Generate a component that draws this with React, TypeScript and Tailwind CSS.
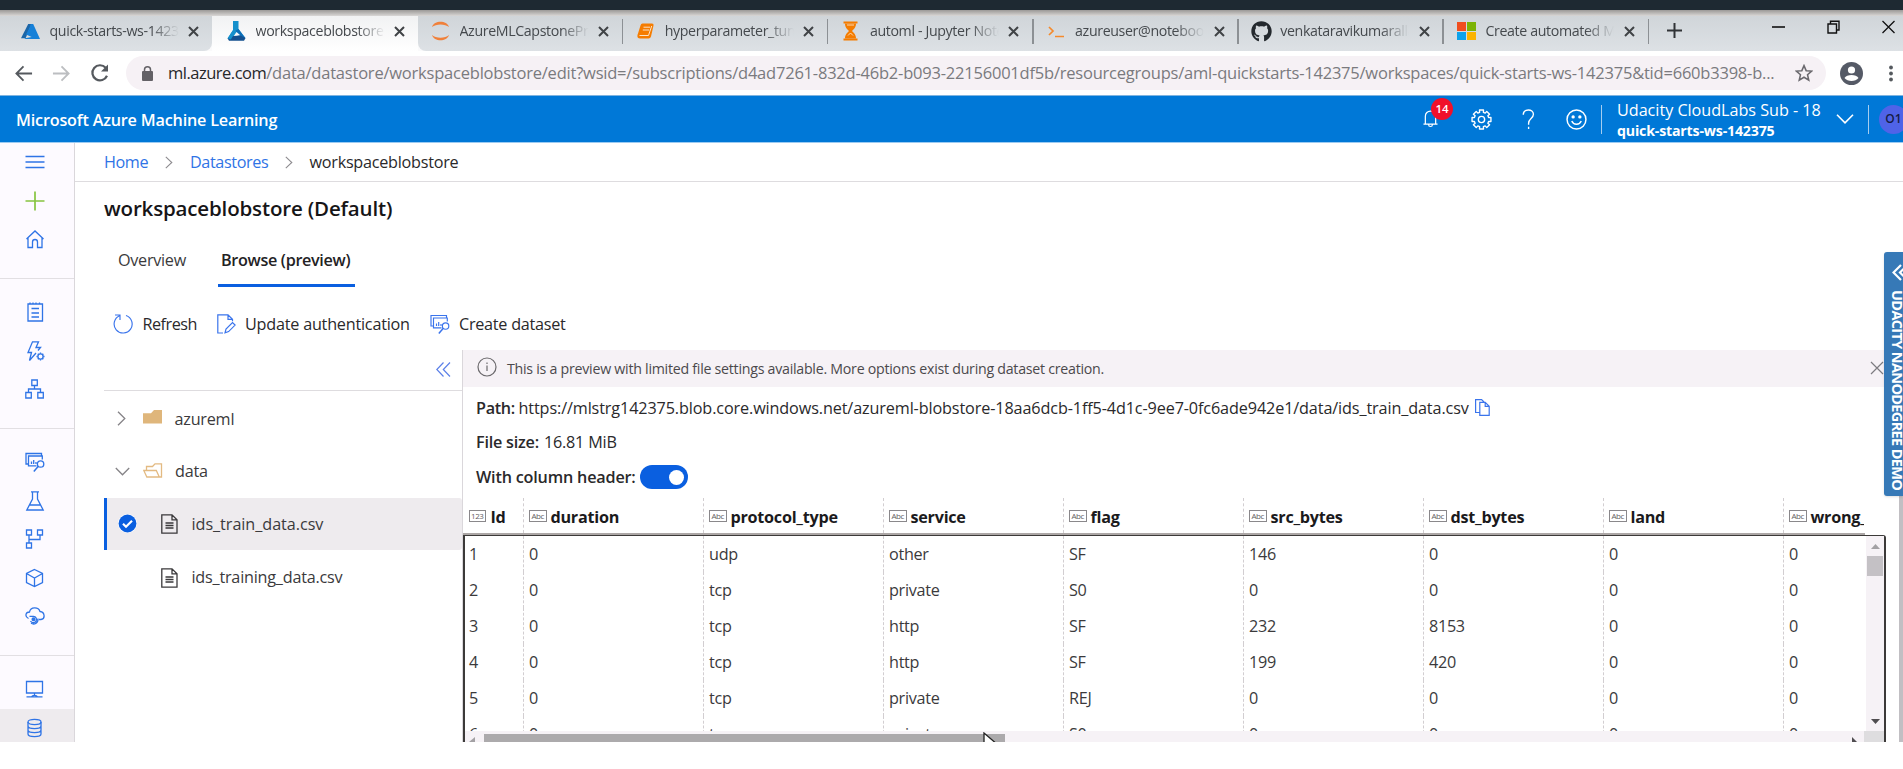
import type { ReactNode } from "react";
import { FaGithub } from "react-icons/fa";

type IconProps = { size?: number; className?: string; children: ReactNode; sw?: number };

function Icon({ size = 20, className = "", sw = 1.15, children }: IconProps) {
  return (
    <svg width={size} height={size} viewBox="0 0 20 20" fill="none" stroke="currentColor" strokeWidth={sw} className={`shrink-0 ${className}`}>
      {children}
    </svg>
  );
}

/* ---------- browser chrome ---------- */

const AzureLogo = () => (
  <svg width="19" height="17" viewBox="0 0 19 17" className="shrink-0">
    <path d="M7.2 1 0 15.2h4.6L10.6 1z" fill="#1b66a8" />
    <path d="M8.3 5.2 5 11.6l5.6 2.4L4 15.2 3.6 16H19L12.2 1H9.8z" fill="#1680d8" />
  </svg>
);
const FlaskLogo = () => (
  <svg width="19" height="20" viewBox="0 0 19 20" className="shrink-0">
    <path d="M6 0h5.500v8l6.500 9H1l5-8z" fill="#1590cc" />
    <path d="m8.500 9.500 3-1.500L18.500 17l-5 1z" fill="#0c6fb8" />
    <path d="M6.200 15.800 9.500 11l3.800 3.300z" fill="#fafafb" />
    <path d="M.5 17.200 6 15l7.500-.5 5 2.700-1.500 2.500H2z" fill="#14508f" />
    <path d="M.5 17.200 5.800 9.500l2 2.500-4 6.500z" fill="#1590cc" />
  </svg>
);
const JupyterLogo = () => (
  <svg width="19" height="20" viewBox="0 0 19 20" className="shrink-0" fill="#f0803a">
    <path d="M1 6C3-1 16-1 18 6 14 2.500 5 2.500 1 6zM1 14c2 7 15 7 17 0-4 3.500-13 3.500-17 0z" />
  </svg>
);
const BookLogo = () => (
  <svg width="19" height="20" viewBox="0 0 19 20" className="shrink-0">
    <path d="M6.500 2.500H16q2 0 1.500 2L15 15.500q-.5 2-2.500 2H4C1 17.500 1 14.500 2 12.500L4.500 4.500q.5-2 2-2z" fill="#f57c00" />
    <path d="M7.500 6.200h6.500M6.800 9h6.500M3.500 14.500h9l3.200-9.500" stroke="#fbe3c8" strokeWidth="1" fill="none" />
  </svg>
);
const HourglassLogo = () => (
  <svg width="19" height="20" viewBox="0 0 19 20" className="shrink-0">
    <path d="M2.500 1.500h14M2.500 18.500h14" stroke="#f57c00" strokeWidth="1.800" />
    <path d="M4 2.500c0 4 2 5.500 4 7.500-2 2-4 3.500-4 7.500h11c0-4-2-5.500-4-7.500 2-2 4-3.500 4-7.500z" fill="#f57c00" />
    <path d="M6 4h7M7 14.500l2.500-2.500 2.500 2.500" stroke="#fbe3c8" strokeWidth=".9" fill="none" />
  </svg>
);
const TermLogo = () => (
  <svg width="19" height="20" viewBox="0 0 19 20" className="shrink-0" fill="none" stroke="#f58a2c" strokeWidth="1.700">
    <path d="m2 6 4 4-4 4M8 15.500h9" />
  </svg>
);
const GithubLogo = () => <FaGithub size={21} className="-mx-px shrink-0 text-[#24292e]" />;
const MsLogo = () => (
  <span className="grid h-[18px] w-[19px] shrink-0 grid-cols-2 gap-px">
    <span className="bg-[#f04e1f]" />
    <span className="bg-[#7cb305]" />
    <span className="bg-[#0ea2ea]" />
    <span className="bg-[#fbb300]" />
  </span>
);

const tabs = [
  { logo: AzureLogo, text: "quick-starts-ws-142375", state: "first" },
  { logo: FlaskLogo, text: "workspaceblobstore", state: "active" },
  { logo: JupyterLogo, text: "AzureMLCapstoneProject", state: "" },
  { logo: BookLogo, text: "hyperparameter_tuning", state: "" },
  { logo: HourglassLogo, text: "automl - Jupyter Notebook", state: "" },
  { logo: TermLogo, text: "azureuser@notebook", state: "" },
  { logo: GithubLogo, text: "venkataravikumaralla", state: "" },
  { logo: MsLogo, text: "Create automated ML", state: "" },
];

function TabStrip() {
  return (
    <div className="flex h-[35px] shrink-0 bg-[#fafafb]">
      {tabs.map((t) => (
        <div
          key={t.text}
          className={
            t.state === "active"
              ? "flex h-full w-[206px] shrink-0 items-center bg-gradient-to-b from-[#f1f2f3] to-white pb-[5px] pl-[15px]"
              : t.state === "first"
                ? "flex h-full w-[212px] shrink-0 items-center rounded-br-[8px] bg-gradient-to-b from-[#d0d5d9] to-[#dde1e5] pb-[5px] pl-[21px]"
                : t.text.startsWith("AzureML")
                  ? "flex h-full w-[205.200px] shrink-0 items-center rounded-bl-[8px] bg-gradient-to-b from-[#d0d5d9] to-[#dde1e5] pb-[5px] pl-[13px]"
                  : "flex h-full w-[205.200px] shrink-0 items-center bg-gradient-to-b from-[#d0d5d9] to-[#dde1e5] pb-[5px] pl-[13px]"
          }
        >
          <t.logo />
          <span className="ml-[9.500px] w-[129px] shrink-0 overflow-hidden text-[14.200px] leading-[22px] tracking-[-0.360px] whitespace-nowrap text-[#45494d] [mask-image:linear-gradient(to_right,black_78%,transparent)]">
            {t.text}
          </span>
          <svg width="11" height="11" viewBox="0 0 11 11" className="ml-[9.500px] shrink-0" stroke="#404346" strokeWidth="2">
            <path d="m1 1 9 9M10 1 1 10" />
          </svg>
          {t.state === "" && <span className="ml-auto h-[25px] w-[1.500px] bg-[#8c9094]" />}
        </div>
      ))}
      <div className="flex flex-1 items-start justify-between bg-gradient-to-b from-[#d0d5d9] to-[#dde1e5] pt-[4px] pr-[8px] pl-[18px] text-[#222]">
        <svg width="15" height="15" viewBox="0 0 15 15" stroke="#303336" strokeWidth="2" className="mt-[3px]">
          <path d="M7.500 0v15M0 7.500h15" />
        </svg>
        <div className="flex items-center gap-[42px]">
          <svg width="13" height="14" viewBox="0 0 13 14" stroke="#111" strokeWidth="1.600">
            <path d="M0 7h13" />
          </svg>
          <svg width="13" height="14" viewBox="0 0 13 14" stroke="#111" strokeWidth="1.400" fill="none">
            <path d="M1 4h8.500v9H1zM3.500 4V1.200h8.500v8.800H9.500" />
          </svg>
          <svg width="13" height="14" viewBox="0 0 13 14" stroke="#111" strokeWidth="1.300">
            <path d="m.5 1 12 12M12.500 1l-12 12" />
          </svg>
        </div>
      </div>
    </div>
  );
}

function AddressBar() {
  return (
    <div className="flex h-[44px] shrink-0 items-center bg-white pr-[8px] pl-[14px]">
      <Icon size={19} sw={1.9} className="text-[#55595e]">
        <path d="M19 10H2.500M10 2.500 2.500 10l7.500 7.500" />
      </Icon>
      <Icon size={19} sw={1.9} className="ml-[19px] text-[#bcbec1]">
        <path d="M1 10h16.500M10 2.500l7.500 7.500-7.500 7.500" />
      </Icon>
      <Icon size={20} sw={2.2} className="ml-[19px] text-[#55595e]">
        <path d="M17 12.800A7.600 7.600 0 1 1 15.700 4.800" />
        <path d="M18 1.500v7h-7z" fill="currentColor" stroke="none" />
      </Icon>
      <div className="ml-[16px] flex h-[34px] w-[1700px] shrink-0 items-center rounded-full bg-[#f6f1f5] pr-[13px] pl-[16px]">
        <svg width="11" height="15" viewBox="0 0 11 15" className="shrink-0">
          <rect x="0" y="5" width="11" height="10" rx="1" fill="#636166" />
          <path d="M2.500 6V3.800a3 3 0 0 1 6 0V6" fill="none" stroke="#636166" strokeWidth="1.500" />
        </svg>
        <span className="ml-[15px] w-[1610px] shrink-0 text-[16.500px] leading-[24px] tracking-[-0.215px] whitespace-nowrap text-[#7a7a7e]">
          <span className="tracking-[-0.500px] text-[#26272a]">ml.azure.com</span>
          /data/datastore/workspaceblobstore/edit?wsid=/subscriptions/d4ad7261-832d-46b2-b093-22156001df5b/resourcegroups/aml-quickstarts-142375/workspaces/quick-starts-ws-142375&amp;tid=660b3398-b...
        </span>
        <Icon size={18} sw={1.7} className="ml-auto text-[#6b696e]">
          <path d="m10 1.800 2.400 5.600 6.100.5-4.600 4 1.400 6L10 14.700 4.700 17.900l1.400-6-4.600-4 6.100-.5z" />
        </Icon>
      </div>
      <svg width="23" height="23" viewBox="0 0 23 23" className="ml-[14px] shrink-0">
        <circle cx="11.500" cy="11.500" r="11.500" fill="#555a66" />
        <circle cx="11.500" cy="8" r="3.600" fill="#fff" />
        <path d="M4.500 16c2-4 12-4 14 0-3 4-11 4-14 0z" fill="#fff" />
      </svg>
      <svg width="4" height="17" viewBox="0 0 4 17" fill="#55595e" className="ml-[26px] shrink-0">
        <circle cx="2" cy="2.500" r="1.900" />
        <circle cx="2" cy="8.500" r="1.900" />
        <circle cx="2" cy="14.500" r="1.900" />
      </svg>
    </div>
  );
}

/* ---------- azure header ---------- */

const gearPath = (() => {
  const pts: string[] = [];
  for (let i = 0; i < 8; i++) {
    const at = (deg: number, r: number) => {
      const a = ((i * 45 + deg) * Math.PI) / 180;
      return `${(10 + r * Math.cos(a)).toFixed(2)} ${(10 + r * Math.sin(a)).toFixed(2)}`;
    };
    pts.push(at(-12, 9.2), at(12, 9.2), at(15, 7), at(30, 7));
  }
  return `M${pts.join("L")}Z`;
})();

function AzureHeader() {
  return (
    <div className="flex h-[48px] shrink-0 items-center border-t border-b border-t-[#7fb4e0] border-b-[#9ccbf2] bg-[#0078d7] pl-[16px] text-white">
      <span className="pt-[3px] text-[16.200px] font-semibold tracking-[-0.190px]">Microsoft Azure Machine Learning</span>
      <div className="relative ml-auto flex h-full w-[15px] items-center">
        <svg width="16" height="20" viewBox="0 0 16 20" fill="none" stroke="#fff" strokeWidth="1.300">
          <path d="M.5 15.500h15M2.500 15.500V7a5.500 5.500 0 0 1 11 0v8.500M6 16a2 2 0 0 0 4 0" />
        </svg>
        <span className="absolute top-[2px] left-[8px] flex size-[22px] items-center justify-center rounded-full bg-[#f0102a] text-[11.500px] font-semibold">14</span>
      </div>
      <Icon size={21} className="ml-[33px]" sw={1.3}>
        <path d={gearPath} strokeLinejoin="round" />
        <circle cx="10" cy="10" r="3" />
      </Icon>
      <Icon size={21} className="ml-[26px]" sw={1.3}>
        <path d="M5 5.500C5-.5 14.700-.5 14.700 5c0 4-4.600 4.200-4.600 8.500v1.500M10.100 17v2" />
      </Icon>
      <Icon size={21} className="ml-[27px]" sw={1.4}>
        <circle cx="10" cy="10" r="9" />
        <path d="M5.500 11.500c1.500 4 7.500 4 9 0" />
        <circle cx="6.800" cy="7.500" r=".9" fill="currentColor" />
        <circle cx="13.200" cy="7.500" r=".9" fill="currentColor" />
      </Icon>
      <span className="ml-[14px] h-[29px] w-px bg-[#a5cdf0]" />
      <div className="ml-[15px] flex w-[204px] flex-col pt-[3px] whitespace-nowrap">
        <span className="text-[16.200px] leading-[20px] tracking-[-0.030px]">Udacity CloudLabs Sub - 18</span>
        <span className="text-[14.200px] leading-[21px] font-bold tracking-[-0.190px]">quick-starts-ws-142375</span>
      </div>
      <svg width="18" height="10" viewBox="0 0 18 10" className="ml-[15px] shrink-0" fill="none" stroke="#fff" strokeWidth="1.600">
        <path d="m1 .8 8 8 8-8" />
      </svg>
      <span className="ml-[14px] h-[29px] w-px bg-[#a5cdf0]" />
      <div className="ml-[10px] flex h-[29px] w-[24px] shrink-0 items-center overflow-hidden">
        <span className="flex size-[29px] shrink-0 items-center justify-center rounded-full bg-[#4f63e8] text-[12px] font-semibold text-[#161c46]">O1</span>
      </div>
    </div>
  );
}

/* ---------- side navigation ---------- */

const DatasetGlyph = () => (
  <>
    <path d="M3.200 12H1V1.500h15.500v2M17.300 7.500V4H3.500v9.800h8" />
    <path d="M6.500 12V9.500M8.700 12V8M11 12V10" />
    <circle cx="15.600" cy="12" r="3.200" />
    <path d="m13.300 14.300-4.500 5.200" strokeWidth="1.500" />
  </>
);

const navGroups: ReactNode[][] = [
  [
    <path d="M.5 4.500h19M.5 10h19M.5 15.500h19" />,
    <path d="M10 .5v19M.5 10h19" stroke="#86c440" strokeWidth="1.700" />,
    <path d="M1.500 10 10 2l8.500 8M3 9v9.500h4.500V13a2.500 2.500 0 0 1 5 0v5.500H17V9" />,
  ],
  [
    <>
      <path d="M3 2h14.500v17H3zM5 2V.5M8 2V.5M11 2V.5M14.500 2V.5" />
      <path d="M6.500 6.500h7.500M6.500 11h7.500M6.500 15h7.500" />
    </>,
    <>
      <path d="m11 12-6.500 7.500 2-8H3L7.500.8h6L11 6.500h4.500L13 9.500" />
      <circle cx="15.500" cy="15.500" r="2.600" />
      <path d="M15.500 11.500v1.200M15.500 18.300v1.200M11.500 15.500h1.200M18.300 15.500h1.200M12.800 12.800l.8.8M17.500 17.500l.8.8M18.300 12.800l-.8.8M12.800 18.300l.8-.8" />
    </>,
    <path d="M6.800 1h5.500v5.500H6.800zM.8 13.500h5.500V19H.8zM12.800 13.500h5.500V19h-5.500zM9.500 6.500V10M3.500 13.500V10h12v3.500" />,
  ],
  [
    <DatasetGlyph />,
    <path d="M6 .8h8M7.500.8V8L1.800 19h16.400L12.500 8V.8M4.500 14h11" />,
    <path d="M1.500 1h5v5h-5zM12.500 1h5v5h-5zM1.500 14h5v5h-5zM4 6v8M4 10.500h11V6" />,
    <path d="m9.500 1.500 8 4v9l-8 4-8-4v-9zM1.500 5.500l8 4.500 8-4.500M9.500 10v8.500" />,
    <>
      <path d="M3.500 12.500C-.5 10.500.5 6 4.500 6c1-5.500 9-5.500 10.500-.5 5 .5 5.500 7.500 1 8H14" />
      <path d="M4.500 10.300h4a3.200 3.200 0 1 1-3 4.700M6 17.300c3 1.700 7.500.2 7-4.800" />
      <circle cx="8.500" cy="13.300" r="1.400" fill="currentColor" />
    </>,
  ],
  [
    <path d="M1.500 2.500h16v11.500h-16zM9.500 14v2.500M1.500 17.800h16M6.500 17.800c1-2 5-2 6 0" />,
    <>
      <ellipse cx="9.500" cy="4" rx="6.500" ry="2.600" />
      <path d="M3 4v12c0 3.400 13 3.400 13 0V4M3 8c0 3.400 13 3.400 13 0M3 12c0 3.400 13 3.400 13 0" />
    </>,
  ],
];

function SideNav() {
  return (
    <nav className="flex w-[75px] shrink-0 flex-col border-r border-[#dad7db] bg-[#fdfaff] text-[#2f74e6]">
      {navGroups.map((g, gi) => (
        <div key={gi} className={gi === 0 ? "shrink-0 pb-[19px]" : "shrink-0 border-t border-[#e2dfe3] pt-[14.500px] pb-[19px]"}>
          {g.map((glyph, i) => (
            <div key={i} className={gi === 3 && i === 1 ? "flex h-[38.500px] items-center bg-[#eeebee] pl-[25px]" : "flex h-[38.500px] items-center pl-[25px]"}>
              <Icon sw={1.3}>{glyph}</Icon>
            </div>
          ))}
        </div>
      ))}
    </nav>
  );
}

/* ---------- file tree ---------- */

const FileGlyph = () => (
  <svg width="17" height="20" viewBox="0 0 17 20" fill="none" stroke="#3a393b" strokeWidth="1.300" className="shrink-0">
    <path d="M.8.800H11l5 5v13.400H.8zM11 .8v5h5M4.500 9h8M4.500 11.500h8M4.500 14h8" />
  </svg>
);

function FileTree() {
  return (
    <div className="flex w-[358px] shrink-0 flex-col text-[16.200px] tracking-[-0.220px] text-[#3b3a3c]">
      <div className="flex h-[41.500px] shrink-0 items-center justify-end border-b border-[#dedcdf] pr-[11px]">
        <svg width="15" height="15" viewBox="0 0 15 15" fill="none" stroke="#5c80e8" strokeWidth="1.200">
          <path d="M7.500.5.8 7.500l6.700 7M14 .5 7.300 7.500l6.700 7" />
        </svg>
      </div>
      <div className="flex h-[54.500px] shrink-0 items-center pt-px pl-[13px]">
        <svg width="9" height="15" viewBox="0 0 9 15" fill="none" stroke="#858387" strokeWidth="1.300">
          <path d="m1 .8 6.800 6.700L1 14.200" />
        </svg>
        <svg width="19" height="14" viewBox="0 0 19 14" className="mb-[3px] ml-[17px]" fill="#dfb67b">
          <path d="M0 3.200h8L11 0h8v13.500H0z" />
        </svg>
        <span className="ml-[12.500px]">azureml</span>
      </div>
      <div className="flex h-[52px] shrink-0 items-center pl-[10.500px]">
        <svg width="15" height="9" viewBox="0 0 15 9" fill="none" stroke="#858387" strokeWidth="1.300">
          <path d="m.8 1 6.700 6.800L14.200 1" />
        </svg>
        <svg width="20" height="15" viewBox="0 0 20 15" className="mb-[3px] ml-[13.500px]" fill="none" stroke="#e3ba82" strokeWidth="1.300">
          <path d="M3.800 14 .8 7.500h12.500l3 6.500zM3.500 7.500v-4h6L12 .8h6.500V14h-2.200" />
        </svg>
        <span className="ml-[12px]">data</span>
      </div>
      <div className="flex h-[52.500px] shrink-0 items-center rounded-r-[3px] border-l-[3px] border-[#0a5fe0] bg-[#eeebee] pl-[11px] font-medium">
        <svg width="19" height="19" viewBox="0 0 19 19" className="shrink-0">
          <circle cx="9.500" cy="9.500" r="9.500" fill="#fff" />
          <circle cx="9.500" cy="9.500" r="8.900" fill="#0a5fe0" />
          <path d="m5 9.700 3 3 6-6" fill="none" stroke="#fff" strokeWidth="2.200" />
        </svg>
        <span className="ml-[23.500px] flex items-center gap-[14px] pt-px tracking-[-0.050px]">
          <FileGlyph />
          ids_train_data.csv
        </span>
      </div>
      <div className="flex h-[53px] shrink-0 items-center gap-[14px] pt-[2px] pl-[56.500px]">
        <FileGlyph />
        <span>ids_training_data.csv</span>
      </div>
    </div>
  );
}

/* ---------- preview table ---------- */

const columns = ["Id", "duration", "protocol_type", "service", "flag", "src_bytes", "dst_bytes", "land", "wrong_"];
const rows = [
  ["1", "0", "udp", "other", "SF", "146", "0", "0", "0"],
  ["2", "0", "tcp", "private", "S0", "0", "0", "0", "0"],
  ["3", "0", "tcp", "http", "SF", "232", "8153", "0", "0"],
  ["4", "0", "tcp", "http", "SF", "199", "420", "0", "0"],
  ["5", "0", "tcp", "private", "REJ", "0", "0", "0", "0"],
  ["6", "0", "tcp", "private", "S0", "0", "0", "0", "0"],
];
const grid = "grid grid-cols-[60px_180px_180px_180px_180px_180px_180px_180px_81px]";

function TypeBadge({ numeric }: { numeric: boolean }) {
  return (
    <span className="mb-[3px] flex h-[12px] w-[17.500px] shrink-0 items-center justify-center border border-[#8a888b] text-[8px] leading-none tracking-[-0.400px] text-[#5f5d62]">
      {numeric ? "123" : "Abc"}
    </span>
  );
}

function PreviewTable() {
  return (
    <div className="flex min-h-0 w-[1423px] flex-1 flex-col">
      <div className={`${grid} h-[35px] w-[1401px] shrink-0`}>
        {columns.map((c, i) => (
          <div
            key={c}
            className={
              i === 0
                ? "flex items-center gap-[4.500px] overflow-hidden pt-[4px] pl-[5.500px]"
                : "flex items-center gap-[4px] overflow-hidden border-l border-dashed border-[#d2ced1] pt-[4px] pl-[5px]"
            }
          >
            <TypeBadge numeric={i === 0} />
            <span className="text-[16.200px] leading-[24px] font-bold tracking-[-0.260px] text-[#1b1a1c]">{c}</span>
          </div>
        ))}
      </div>
      <div className="h-[2px] w-[1402px] shrink-0 bg-[#aca7a6]" />
      <div className="flex min-h-0 flex-1 flex-col rounded-tr-[3px] border-t-[1.500px] border-r-[2px] border-l-[2px] border-[#3c3a39]">
        <div className="flex min-h-0 flex-1">
          <div className="-ml-[2px] w-[1403px] shrink-0 overflow-hidden">
            {rows.map((r) => (
              <div key={r[0]} className={`${grid} h-[36px]`}>
                {r.map((v, i) => (
                  <div
                    key={i}
                    className={
                      i === 0
                        ? "flex items-center pl-[6px] text-[16.200px] tracking-[-0.300px] text-[#3b3a3c]"
                        : "flex items-center border-l border-dashed border-[#d2ced1] pl-[5px] text-[16.200px] tracking-[-0.300px] text-[#3b3a3c]"
                    }
                  >
                    {v}
                  </div>
                ))}
              </div>
            ))}
          </div>
          <div className="flex flex-1 flex-col items-center bg-[#f6f2f6] pt-[8px] pb-[7px]">
            <svg width="9" height="5" viewBox="0 0 9 5" fill="#a3a1a4">
              <path d="M4.500 0 9 5H0z" />
            </svg>
            <div className="mt-[7px] h-[20px] w-[15.500px] bg-[#c4c1c5]" />
            <svg width="9" height="5" viewBox="0 0 9 5" fill="#4f4d50" className="mt-auto">
              <path d="M0 0h9L4.500 5z" />
            </svg>
          </div>
        </div>
        <div className="flex h-[11px] shrink-0 items-end overflow-hidden bg-[#f6f2f6]">
          <svg width="6" height="5" viewBox="0 0 6 5" fill="#a3a1a4" className="ml-[4px] shrink-0">
            <path d="M6 0v5H0z" />
          </svg>
          <div className="ml-[9px] h-[8px] w-[521px] bg-[#acaaac]" />
          <svg width="5" height="5" viewBox="0 0 5 5" fill="#4f4d50" className="ml-auto shrink-0">
            <path d="M0 0v5h5z" />
          </svg>
          <div className="ml-[7px] h-full w-[20px] shrink-0 bg-[#dedddf]" />
        </div>
      </div>
    </div>
  );
}

function Preview() {
  return (
    <section className="flex min-w-0 flex-1 flex-col border-l border-[#dad7db]">
      <div className="flex h-[37px] shrink-0 items-center bg-[#f6f2f6] pr-[19px] pl-[14px]">
        <svg width="20" height="20" viewBox="0 0 20 20" fill="none" stroke="#6b696c" strokeWidth="1.200" className="mb-[3px] shrink-0">
          <circle cx="10" cy="10" r="9" />
          <path d="M10 8.500V14M10 5.500v1.500" />
        </svg>
        <span className="ml-[10px] pt-px text-[14.200px] tracking-[-0.255px] text-[#4b494c]">
          This is a preview with limited file settings available. More options exist during dataset creation.
        </span>
        <svg width="14" height="14" viewBox="0 0 14 14" stroke="#7d7b80" strokeWidth="1.200" className="ml-auto">
          <path d="m1 1 12 12M13 1 1 13" />
        </svg>
      </div>
      <div className="flex shrink-0 flex-col pt-[4px] pl-[13px] text-[16.200px] leading-[34.800px] text-[#2a292b]">
        <div className="flex h-[34.800px] items-center whitespace-nowrap">
          <span className="w-[42.500px] font-semibold tracking-[-0.300px]">Path:</span>
          <span className="tracking-[-0.118px]">
            https://mlstrg142375.blob.core.windows.net/azureml-blobstore-18aa6dcb-1ff5-4d1c-9ee7-0fc6ade942e1/data/ids_train_data.csv
          </span>
          <svg width="15" height="17" viewBox="0 0 15 17" fill="none" stroke="#3a74ec" strokeWidth="1.200" className="ml-[6px]">
            <path d="M4.500 13.500H.6V.6h6L9 3M4.800 3.300h5.400l4 4v9.100H4.800zM10.200 3.300v4h4" />
          </svg>
        </div>
        <div className="h-[34.800px]">
          <span className="font-semibold tracking-[-0.220px]">File size:</span>
          <span className="ml-[5px] tracking-[-0.200px]">16.81 MiB</span>
        </div>
        <div className="flex h-[34.800px] items-center">
          <span className="w-[163.500px] font-semibold tracking-[-0.190px]">With column header:</span>
          <span className="flex h-[24px] w-[48px] items-center justify-end rounded-full bg-[#0a5fe0] pr-[4px]">
            <span className="size-[15px] rounded-full bg-white" />
          </span>
        </div>
      </div>
      <div className="flex min-h-0 flex-1 flex-col pt-[3px]">
        <PreviewTable />
      </div>
    </section>
  );
}

/* ---------- main content ---------- */

const Crumb = () => (
  <svg width="8" height="13" viewBox="0 0 8 13" fill="none" stroke="#8d8b8f" strokeWidth="1.100">
    <path d="m.8.800 6 5.700-6 5.700" />
  </svg>
);

function Content() {
  return (
    <main className="flex min-w-0 flex-1 flex-col bg-white">
      <div className="flex h-[39px] shrink-0 items-center border-b border-[#dedcdf] pl-[29px] text-[16.200px]">
        <span className="w-[61px] tracking-[-0.400px] text-[#2f74e6]">Home</span>
        <Crumb />
        <span className="ml-[17px] w-[95px] tracking-[-0.380px] text-[#2f74e6]">Datastores</span>
        <Crumb />
        <span className="ml-[16.500px] tracking-[-0.250px] text-[#2a292b]">workspaceblobstore</span>
      </div>
      <h1 className="mt-[12px] shrink-0 pl-[29px] text-[20.500px] leading-[28px] font-semibold tracking-[-0.160px] text-[#161517]">workspaceblobstore (Default)</h1>
      <div className="mt-[13.500px] flex h-[51px] shrink-0 pl-[43px] text-[16.200px] leading-[48px] text-[#3b3a3c]">
        <span className="w-[100px] tracking-[-0.280px]">Overview</span>
        <span className="w-[137px] border-b-[3px] border-[#0a5fe0] pl-[3px] font-semibold tracking-[-0.330px] text-[#232224]">Browse (preview)</span>
      </div>
      <div className="mt-[17px] flex h-[40px] shrink-0 items-center pt-px pl-[38px] text-[16.200px] text-[#2a292b]">
        <Icon size={20} sw={1.15} className="text-[#3a74ec]">
          <path d="M13 1.500a9 9 0 1 1-6.500.3M2 1h5v5" />
        </Icon>
        <span className="ml-[9.500px] w-[74.500px] tracking-[-0.500px]">Refresh</span>
        <svg width="19" height="20" viewBox="0 0 19 20" fill="none" stroke="#3a74ec" strokeWidth="1.200">
          <path d="M6 19H.8V.8H11l4.500 4.500v2M11 .8v4.500h4.500M8 18.800l1-3.800 6.500-6.500 2.600 2.600-6.500 6.500z" />
        </svg>
        <span className="ml-[9px] w-[184.500px] tracking-[-0.220px]">Update authentication</span>
        <Icon size={20} className="text-[#3a74ec]">
          <DatasetGlyph />
        </Icon>
        <span className="ml-[9.500px] tracking-[-0.260px]">Create dataset</span>
      </div>
      <div className="mt-[6px] flex min-h-0 flex-1 pl-[29px]">
        <FileTree />
        <Preview />
      </div>
    </main>
  );
}

export default function App() {
  return (
    <div className="relative flex h-[769px] w-[1903px] flex-col overflow-hidden bg-white font-['Open_Sans','Noto_Sans',sans-serif]">
      <div className="h-[10px] shrink-0 bg-[#1e2932]" />
      <div className="h-[6px] shrink-0 bg-gradient-to-b from-[#9b9997] to-[#d9d7d6]" />
      <TabStrip />
      <AddressBar />
      <AzureHeader />
      <div className="flex h-[599px] shrink-0 overflow-hidden">
        <SideNav />
        <Content />
      </div>
      <div className="absolute top-[496px] right-0 h-[246px] w-[4px] bg-[#c1bfc3]" />
      <div className="absolute top-[252px] right-0 flex h-[244px] w-[19px] flex-col items-start overflow-hidden rounded-l-[3px] bg-[#3679b7] pt-[12px] pl-[8px] text-white shadow">
        <svg width="16" height="17" viewBox="0 0 16 17" fill="none" stroke="#fff" strokeWidth="2.200" className="shrink-0">
          <path d="m9 1-7.500 7.500L9 16M14 2.500l-6 6 6 6" />
        </svg>
        <span className="mt-[9px] -ml-[5px] text-[14.500px] leading-[20px] font-bold tracking-[-0.650px] whitespace-nowrap [writing-mode:vertical-rl]">UDACITY NANODEGREE DEMO</span>
      </div>
      <svg width="18" height="10" viewBox="0 0 18 10" className="absolute top-[732px] left-[983px]">
        <path d="M1 1v12h14z" fill="#fff" stroke="#222" strokeWidth="1.300" />
      </svg>
    </div>
  );
}
